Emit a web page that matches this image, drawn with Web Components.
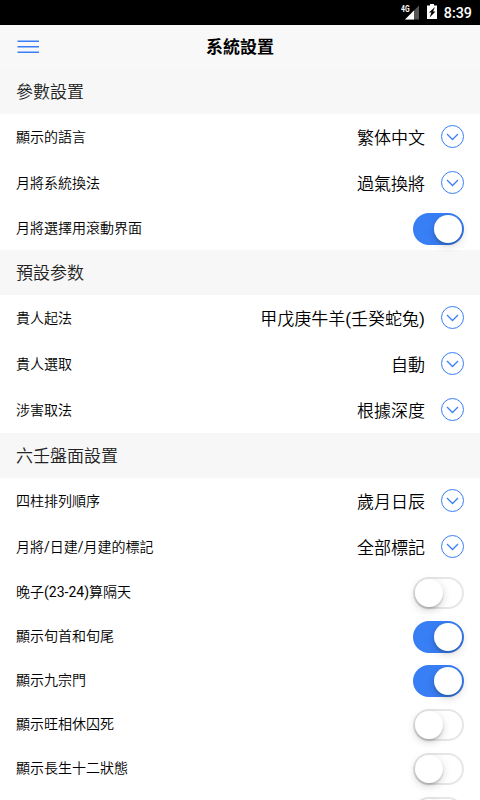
<!DOCTYPE html>
<html lang="zh-Hans">
<head>
<meta charset="utf-8">
<title>系統設置</title>
<style>
html, body { margin: 0; height: 100%; overflow: hidden; background: #fff; }
body { font-family: Roboto, "Noto Sans CJK SC DemiLight", "Noto Sans CJK SC", sans-serif; color: #000; }
</style>
</head>
<body>
<settings-app></settings-app>
<script>
const define = (name, markup) => {
  const template = document.createElement('template');
  template.innerHTML = markup;
  customElements.define(name, class extends HTMLElement {
    constructor() {
      super();
      this.attachShadow({ mode: 'open' }).append(template.content.cloneNode(true));
    }
  });
};

define('status-bar', `
<style>
:host { display: flex; height: 25px; flex: none; background: #000; color: #fff; justify-content: flex-end; align-items: center; padding-right: 8px; box-sizing: border-box; }
svg { display: block; flex: none; }
.signal { margin-right: 8px; }
.battery { margin-right: 7px; }
.time { font: 500 14.3px/25px Roboto, sans-serif; padding-top: 1px; }
.net { font: 700 8.5px Roboto, sans-serif; fill: #fff; }
</style>
<svg class="signal" width="18" height="25" viewBox="0 0 18 25">
  <path d="M18 5.500V19.500H4z" fill="#555"/><path d="M13 10.500V19.500H4z" fill="#fff"/>
  <path d="M0 4h9v8H0z" fill="#000"/>
  <text class="net" x="0" y="11.500" textLength="8.500" lengthAdjust="spacingAndGlyphs">4G</text>
</svg>
<svg class="battery" width="10" height="25" viewBox="0 0 10 25">
  <path d="M3 4h4v1.500h3V19H0V5.500h3z" fill="#fff"/><path d="M8 7 2 12.500h2.500L2.500 17.500 8.500 11.500H6z" fill="#000"/>
</svg>
<span class="time">8:39</span>`);

define('nav-bar', `
<style>
:host { display: grid; grid-template-columns: 56px 1fr 56px; align-items: center; height: 44px; flex: none; background: #f8f8f8; }
svg { display: block; margin-left: 17px; }
.title { font-family: Roboto, "Noto Sans CJK SC", sans-serif; font-size: 17px; font-weight: 700; line-height: 24px; text-align: center; }
</style>
<svg width="23" height="14" viewBox="0 0 23 14"><path d="M.5 1.200h21.500M.5 6.700h21.500M.5 12.200h21.500" stroke="#387ef5" stroke-width="1.600"/></svg>
<span class="title"><slot></slot></span>`);

define('section-title', `
<style>
:host { display: flex; align-items: center; height: 45px; padding: 0 16px; box-sizing: border-box; background: #f7f7f7; color: #222; font-size: 17px; line-height: 24px; }
</style><slot></slot>`);

define('drop-icon', `
<style>:host { display: block; width: 24px; height: 24px; } svg { display: block; }</style>
<svg width="24" height="24" viewBox="0 0 24 24" fill="none" stroke="#387ef5">
  <circle cx="12.500" cy="11.500" r="11" stroke-width="1"/><path d="m7 9 5.500 5.500L18 9" stroke-width="1.250"/>
</svg>`);

define('select-row', `
<style>
:host { display: flex; align-items: center; height: 46px; padding: 0 16px; box-sizing: border-box; }
.label { flex: 1; font-size: 14px; line-height: 20px; }
.value { font-size: 17px; line-height: 24px; margin-right: 15px; padding-top: 2px; }
</style>
<span class="label"><slot></slot></span><span class="value"><slot name="value"></slot></span><drop-icon></drop-icon>`);

define('toggle-switch', `
<style>
:host { display: block; width: 51px; height: 32px; }
.track { width: 51px; height: 32px; box-sizing: border-box; border: 2px solid #e6e6e6; border-radius: 16px; background: #fff; }
.knob { width: 28px; height: 28px; border-radius: 50%; background: #fff; box-shadow: 0 3px 8px rgba(0,0,0,.18), 0 2px 2px rgba(0,0,0,.15); }
:host([checked]) .track { background: #387ef5; border-color: #387ef5; }
:host([checked]) .knob { margin-left: 19px; }
</style>
<div class="track"><div class="knob"></div></div>`);

define('toggle-row', `
<style>
:host { display: flex; align-items: center; height: 44px; padding: 0 16px; box-sizing: border-box; }
.label { flex: 1; font-size: 14px; line-height: 20px; }
.control { padding-top: 2px; }
</style>
<span class="label"><slot></slot></span><div class="control"><slot name="control"></slot></div>`);

define('settings-app', `
<style>
:host { display: flex; flex-direction: column; width: 480px; height: 800px; overflow: hidden; }
main { flex: 1; min-height: 0; overflow: hidden; }
</style>
<status-bar></status-bar>
<nav-bar>系統設置</nav-bar>
<main>
  <section-title>參數設置</section-title>
  <select-row>顯示的語言<span slot="value">繁体中文</span></select-row>
  <select-row>月將系統換法<span slot="value">過氣換將</span></select-row>
  <toggle-row>月將選擇用滾動界面<toggle-switch slot="control" checked></toggle-switch></toggle-row>
  <section-title>預設参数</section-title>
  <select-row>貴人起法<span slot="value">甲戊庚牛羊(壬癸蛇兔)</span></select-row>
  <select-row>貴人選取<span slot="value">自動</span></select-row>
  <select-row>涉害取法<span slot="value">根據深度</span></select-row>
  <section-title>六壬盤面設置</section-title>
  <select-row>四柱排列順序<span slot="value">歲月日辰</span></select-row>
  <select-row>月將/日建/月建的標記<span slot="value">全部標記</span></select-row>
  <toggle-row>晚子(23-24)算隔天<toggle-switch slot="control"></toggle-switch></toggle-row>
  <toggle-row>顯示旬首和旬尾<toggle-switch slot="control" checked></toggle-switch></toggle-row>
  <toggle-row>顯示九宗門<toggle-switch slot="control" checked></toggle-switch></toggle-row>
  <toggle-row>顯示旺相休囚死<toggle-switch slot="control"></toggle-switch></toggle-row>
  <toggle-row>顯示長生十二狀態<toggle-switch slot="control"></toggle-switch></toggle-row>
  <toggle-row><toggle-switch slot="control"></toggle-switch></toggle-row>
</main>`);
</script>
</body>
</html>
